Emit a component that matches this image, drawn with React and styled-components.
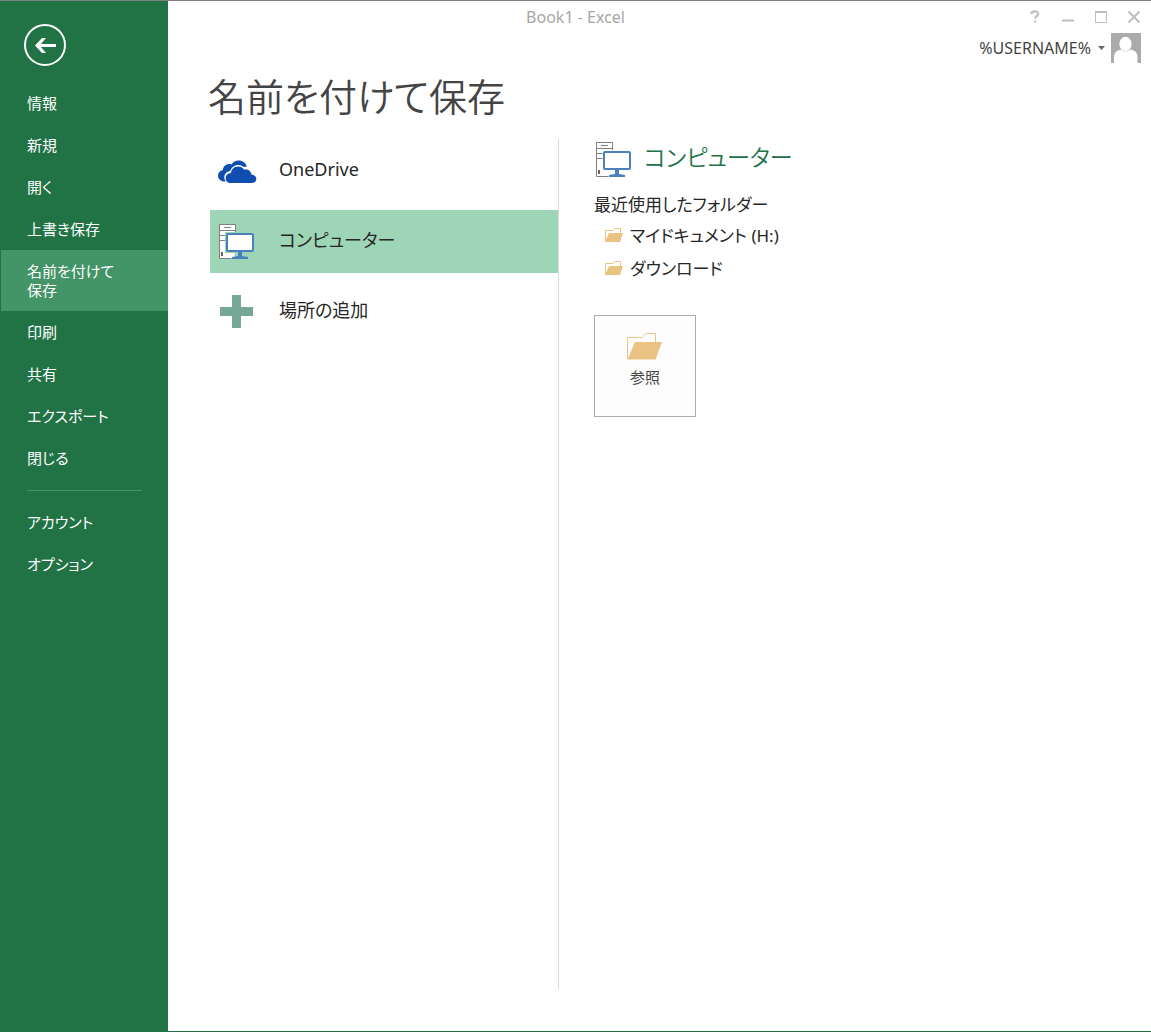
import React from "react";
import styled, { createGlobalStyle, css } from "styled-components";

const GlobalStyle = createGlobalStyle`
  *, *::before, *::after { box-sizing: border-box; }
  body {
    margin: 0;
    font-family: "Noto Sans", "Noto Sans CJK JP", sans-serif;
    font-feature-settings: "palt";
    color: #262626;
    background: #fff;
  }
  button {
    font: inherit;
    font-feature-settings: inherit;
    color: inherit;
    padding: 0;
    border: 0;
    background: none;
    text-align: left;
    cursor: pointer;
  }
  h1, h2, h3, ul { margin: 0; padding: 0; font-weight: 400; }
  ul { list-style: none; }
  svg { display: block; flex: none; }
`;

const Window = styled.div`
  display: grid;
  grid-template-columns: 168px 1fr;
  min-height: 100vh;
  border-top: 1px solid #808080;
  border-bottom: 1px solid #217346;
`;

const Sidebar = styled.nav`
  background: #217346;
  color: #fff;
  padding: 23px 0 0 1px;
`;

const BackButton = styled.button`
  display: block;
  margin: 0 0 16px 23px;
`;

const NavItem = styled.button`
  display: block;
  width: 100%;
  padding: 12px 50px 11px 26px;
  font-size: 15px;
  line-height: 19px;
  background: ${({ $active }) => ($active ? "#439467" : "transparent")};
`;

const NavDivider = styled.hr`
  height: 1px;
  margin: 11px 26px 10px;
  border: 0;
  background: #439467;
`;

const Main = styled.main`
  display: flex;
  flex-direction: column;
  min-width: 0;
`;

const TitleBar = styled.header`
  display: grid;
  height: 32px;
  align-items: center;
  color: #a6a6a6;
`;

const WindowTitle = styled.span`
  grid-area: 1 / 1;
  padding-right: 168px;
  text-align: center;
  font-size: 16px;
  line-height: 20px;
`;

const WindowControls = styled.div`
  grid-area: 1 / 1;
  justify-self: end;
  display: flex;
  gap: 17px;
  padding-right: 9px;
`;

const ControlButton = styled.button`
  width: 16px;
  height: 16px;
`;

const Account = styled.button`
  align-self: flex-end;
  display: flex;
  align-items: center;
  height: 30px;
  margin-right: 10px;
  font-size: 16px;
  color: #444;

  svg:first-of-type { margin: 0 6px 0 7px; }
`;

const PageTitle = styled.h1`
  margin: 4px 0 14px 40px;
  font-size: 38px;
  font-weight: 350;
  line-height: 58px;
  color: #444;
`;

const Content = styled.div`
  flex: 1;
  display: flex;
  margin: 0 0 42px 42px;
`;

const Places = styled.div`
  flex: 0 1 349px;
  display: flex;
  flex-direction: column;
  gap: 7px;
  padding-top: 1px;
  border-right: 1px solid #dcdcdc;
`;

const Place = styled.button`
  display: grid;
  grid-template-columns: 53px 1fr;
  align-items: center;
  column-gap: 16px;
  height: 63px;
  font-size: 18px;
  ${({ $active }) => $active && css`background: #9fd5b7;`}

  svg { justify-self: center; }
`;

const PlaceLabel = styled.span`
  padding-bottom: 6px;
`;

const Details = styled.section`
  flex: 1;
  min-width: 0;
  padding-left: 35px;
`;

const DetailsTitle = styled.h2`
  display: flex;
  align-items: flex-end;
  gap: 12px;
  height: 39px;
  padding-left: 1px;
  font-size: 23px;
  font-weight: 350;
  line-height: 42px;
  color: #217346;
`;

const RecentTitle = styled.h3`
  margin-top: 14px;
  font-size: 17px;
  line-height: 26px;
`;

const Folder = styled.button`
  display: flex;
  align-items: center;
  gap: 7px;
  height: 33px;
  padding-left: 11px;
  font-size: 17px;
`;

const BrowseButton = styled.button`
  display: flex;
  flex-direction: column;
  align-items: center;
  gap: 6px;
  width: 102px;
  height: 102px;
  margin-top: 31px;
  padding-top: 17px;
  border: 1px solid #ababab;
  background: #fdfdfd;
  font-size: 15px;
  line-height: 22px;
  color: #444;
`;

const BackIcon = () => (
  <svg width="42" height="42" viewBox="0 0 42 42" fill="none" stroke="#fff">
    <circle cx="21" cy="21" r="20" strokeWidth="2" />
    <path d="M13 21.5h19" strokeWidth="3" />
    <path d="M11 21.5 18 14h4l-6.3 7.5L22 29h-4z" fill="#fff" stroke="none" />
  </svg>
);

const CloudIcon = () => (
  <svg width="40" height="24" viewBox="0 0 40 24" fill="#0f4db0">
    <path d="M9 21.6H7.5C3.8 21.6 1 19 1 15.8c0-3 2.2-5.200 4.800-5.700C6 6.500 9 4 12.300 4c.8 0 1.500.1 2.200.4C16 2 18.700.5 21.700.5c4 0 7.300 2.600 8.200 6.300-1.200-.1-2.200 0-3.200.3-1.500-1.300-3.400-2-5.400-2-3.800 0-7 2.500-8 6-3.500.4-6 3-6 6.100 0 1.700.6 3.200 1.700 4.400z" />
    <path d="M13.600 23C10.800 23 8.700 20.900 8.700 18.200c0-2.800 2.200-5 5.200-5.100.5-3.800 3.500-6.600 7.200-6.600 2.600 0 4.700 1.200 6 3.200 3.500-1.200 7.100 1.100 7.300 4.800 2.800.2 4.900 2 4.900 4.500 0 2.300-1.800 4-4.200 4z" />
  </svg>
);

const ComputerIcon = ({ filled }) => (
  <svg width="37" height="36" viewBox="0 0 37 36" fill="none">
    <path d="M1.500.5h16V10H8.500v17h8v7.500h-15z" fill="#fff" />
    <path d="M17.500 8V.5h-16v34h12M1.500 6.500h16M1.500 11.500h6M1.500 16.500h6M6 3.500h7" stroke="#808080" />
    <path d="M3 28h2v4H3z" fill="#666" />
    {filled && <path d="M7 8h30v21H7z" fill="#9fd5b7" />}
    <rect x="9" y="10" width="26" height="17" rx="1" fill="#fff" stroke="#4a80bd" strokeWidth="2" />
    <path d="M20 28h4v4l6 1v2H14v-2l6-1z" fill="#4a80bd" />
  </svg>
);

const PlusIcon = () => (
  <svg width="33" height="33" viewBox="0 0 33 33">
    <path d="M12 0h9v12h12v9H21v12h-9V21H0v-9h12z" fill="#77a897" />
  </svg>
);

const FolderIcon = () => (
  <svg width="18" height="14" viewBox="0 0 18 14">
    <path d="M.5 13.500V2.500H8L10 .5h5.500V5" fill="#fff" stroke="#eac282" />
    <path d="M4 5h14l-3 9H0z" fill="#eac282" />
  </svg>
);

const LargeFolderIcon = () => (
  <svg width="36" height="27" viewBox="0 0 36 27">
    <path d="M.5 26V4.500H15l4-4h9.500V10" fill="#fff" stroke="#eac282" />
    <path d="M8 9h27l-6.500 17.500H.5z" fill="#eac282" />
  </svg>
);

const CaretIcon = () => (
  <svg width="7" height="4" viewBox="0 0 7 4"><path d="M0 0h7L3.500 4z" fill="#666" /></svg>
);

const AvatarIcon = () => (
  <svg width="30" height="30" viewBox="0 0 30 30">
    <path d="M0 0h30v30H0z" fill="#ababab" />
    <ellipse cx="14.500" cy="11" rx="6.200" ry="7.200" fill="#fff" />
    <path d="M3 30v-6c0-4.500 3-7 7.500-7.500 2.500 2.600 6 2.600 8.500 0 4.500.5 7.500 3 7.500 7.500v6z" fill="#fff" />
  </svg>
);

const controls = [
  ["ヘルプ", <path key="p" d="M4.500 5V3.500C5.500 2.700 6.700 2.400 8 2.400c2 0 3.200.9 3.200 2.400 0 2.300-3 2.300-3 4.700M7 12.500h2.200" strokeWidth="2.200" />],
  ["最小化", <path key="p" d="M2 11.500h12" strokeWidth="2" />],
  ["最大化", <path key="p" d="M2.500 3v10.500h11V3M2 3.500h12M2 2.500h12" />],
  ["閉じる", <path key="p" d="M2.500 2.500l11 11M13.500 2.500l-11 11" strokeWidth="2" />],
];

const navItems = ["情報", "新規", "開く", "上書き保存", "名前を付けて保存", "印刷", "共有", "エクスポート", "閉じる"];
const settingsItems = ["アカウント", "オプション"];

const places = [
  { label: "OneDrive", icon: <CloudIcon /> },
  { label: "コンピューター", icon: <ComputerIcon filled />, active: true },
  { label: "場所の追加", icon: <PlusIcon /> },
];

const folders = ["マイドキュメント (H:)", "ダウンロード"];

export default function App() {
  return (
    <>
      <GlobalStyle />
      <Window lang="ja">
        <Sidebar>
          <BackButton aria-label="戻る"><BackIcon /></BackButton>
          {navItems.map((label) => (
            <NavItem key={label} $active={label === "名前を付けて保存"}>{label}</NavItem>
          ))}
          <NavDivider />
          {settingsItems.map((label) => <NavItem key={label}>{label}</NavItem>)}
        </Sidebar>
        <Main>
          <TitleBar>
            <WindowTitle>Book1 - Excel</WindowTitle>
            <WindowControls>
              {controls.map(([label, shape]) => (
                <ControlButton key={label} aria-label={label}>
                  <svg width="16" height="16" viewBox="0 0 16 16" fill="none" stroke="#bfbfbf">{shape}</svg>
                </ControlButton>
              ))}
            </WindowControls>
          </TitleBar>
          <Account>
            %USERNAME%
            <CaretIcon />
            <AvatarIcon />
          </Account>
          <PageTitle>名前を付けて保存</PageTitle>
          <Content>
            <Places>
              {places.map(({ label, icon, active }) => (
                <Place key={label} $active={active}>{icon}<PlaceLabel>{label}</PlaceLabel></Place>
              ))}
            </Places>
            <Details>
              <DetailsTitle><ComputerIcon />コンピューター</DetailsTitle>
              <RecentTitle>最近使用したフォルダー</RecentTitle>
              <ul>
                {folders.map((name) => (
                  <li key={name}><Folder><FolderIcon />{name}</Folder></li>
                ))}
              </ul>
              <BrowseButton><LargeFolderIcon />参照</BrowseButton>
            </Details>
          </Content>
        </Main>
      </Window>
    </>
  );
}
